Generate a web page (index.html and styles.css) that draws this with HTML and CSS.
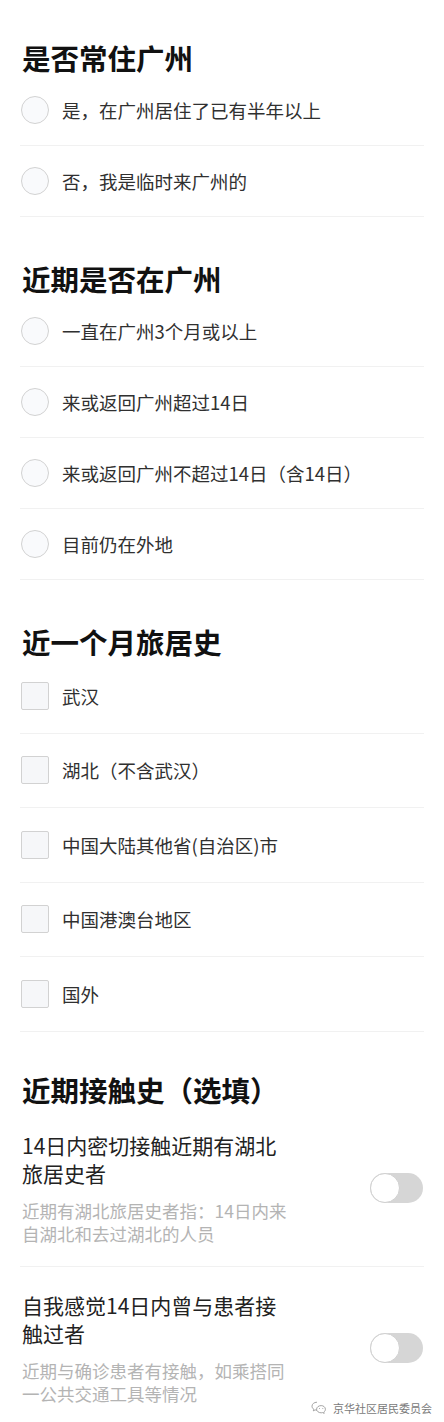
FILE: index.html
```html
<!DOCTYPE html>
<html lang="zh-CN">
<head>
<meta charset="utf-8">
<title>表单</title>
<link rel="stylesheet" href="styles.css">
</head>
<body>
<main class="form">
  <section class="group">
    <h2 class="group-title">是否常住广州</h2>
    <ul class="options">
      <li class="option"><span class="radio"></span><span class="label">是，在广州居住了已有半年以上</span></li>
      <li class="option"><span class="radio"></span><span class="label">否，我是临时来广州的</span></li>
    </ul>
  </section>

  <section class="group">
    <h2 class="group-title">近期是否在广州</h2>
    <ul class="options">
      <li class="option"><span class="radio"></span><span class="label">一直在广州3个月或以上</span></li>
      <li class="option"><span class="radio"></span><span class="label">来或返回广州超过14日</span></li>
      <li class="option"><span class="radio"></span><span class="label">来或返回广州不超过14日（含14日）</span></li>
      <li class="option"><span class="radio"></span><span class="label">目前仍在外地</span></li>
    </ul>
  </section>

  <section class="group">
    <h2 class="group-title">近一个月旅居史</h2>
    <ul class="options checks">
      <li class="option"><span class="checkbox"></span><span class="label">武汉</span></li>
      <li class="option"><span class="checkbox"></span><span class="label">湖北（不含武汉）</span></li>
      <li class="option"><span class="checkbox"></span><span class="label">中国大陆其他省(自治区)市</span></li>
      <li class="option"><span class="checkbox"></span><span class="label">中国港澳台地区</span></li>
      <li class="option"><span class="checkbox"></span><span class="label">国外</span></li>
    </ul>
  </section>

  <section class="group group-contact">
    <h2 class="group-title">近期接触史（选填）</h2>
    <div class="switch-item">
      <div class="switch-text">
        <p class="switch-title">14日内密切接触近期有湖北旅居史者</p>
        <p class="switch-desc">近期有湖北旅居史者指：14日内来自湖北和去过湖北的人员</p>
      </div>
      <span class="toggle"><span class="knob"></span></span>
    </div>
    <div class="switch-item last">
      <div class="switch-text">
        <p class="switch-title">自我感觉14日内曾与患者接触过者</p>
        <p class="switch-desc">近期与确诊患者有接触，如乘搭同一公共交通工具等情况</p>
      </div>
      <span class="toggle"><span class="knob"></span></span>
    </div>
  </section>

  <div class="watermark">
    <svg class="wm-icon" width="16" height="13" viewBox="0 0 16 13" fill="none" stroke="#9a9a9a" stroke-width="0.9">
      <path d="M6 1.2C3.1 1.2 1 3 1 5.2c0 1.3.7 2.4 1.8 3.1l-.5 1.6 1.8-1c.6.2 1.2.3 1.9.3"/>
      <path d="M10.2 4.6c-2.6 0-4.6 1.6-4.6 3.6s2 3.6 4.6 3.6c.5 0 1-.1 1.5-.2l1.5.8-.4-1.3c1-.7 1.6-1.7 1.6-2.9 0-2-2-3.6-4.2-3.6z"/>
      <circle cx="8.5" cy="7.6" r="0.5" fill="#9a9a9a" stroke="none"/>
      <circle cx="11.8" cy="7.6" r="0.5" fill="#9a9a9a" stroke="none"/>
    </svg>
    <span>京华社区居民委员会</span>
  </div>
</main>
</body>
</html>
```

FILE: styles.css
```css
html, body {
  margin: 0;
  padding: 0;
  background: #ffffff;
}

body {
  font-family: "Noto Sans CJK SC", "Noto Sans", sans-serif;
}

.form {
  position: relative;
  box-sizing: border-box;
  min-height: 1422px;
  padding: 41px 20px 0;
}

.group + .group {
  margin-top: 45px;
}

.group.group-contact {
  margin-top: 41px;
}

.group-title {
  margin: 0;
  padding-left: 2px;
  font-size: 28.5px;
  line-height: 34px;
  font-weight: 700;
  color: #111111;
}

.options {
  list-style: none;
  margin: 0;
  padding: 0;
}

.option {
  display: flex;
  align-items: center;
  gap: 13px;
  box-sizing: border-box;
  height: 71px;
  padding-left: 1px;
  border-bottom: 1px solid #f1f1f1;
}

.checks .option {
  height: 74.5px;
}

.radio,
.checkbox {
  flex: none;
  box-sizing: border-box;
  width: 28px;
  height: 28px;
  border: 1.5px solid #d2d2d2;
  background: #f9fafc;
}

.radio {
  border-radius: 50%;
}

.checkbox {
  border-radius: 2px;
  background: #f6f7f9;
}

.label {
  font-size: 18.5px;
  line-height: 1;
  color: #303030;
}

.switch-item {
  display: flex;
  align-items: center;
  justify-content: space-between;
  padding: 24px 0 21px;
  border-bottom: 1px solid #f1f1f1;
}

.switch-item.last {
  border-bottom: none;
}

.switch-text {
  width: 272px;
  padding-left: 2px;
}

.switch-title {
  margin: 0;
  font-size: 21px;
  line-height: 28.5px;
  color: #222222;
}

.switch-desc {
  margin: 11px 0 0;
  font-size: 17.5px;
  line-height: 23px;
  color: #b4b4b4;
}

.toggle {
  position: relative;
  flex: none;
  width: 53px;
  height: 30px;
  margin-right: 1px;
  border-radius: 15px;
  background: #d6d6d6;
}

.knob {
  position: absolute;
  left: 0;
  top: 0;
  box-sizing: border-box;
  width: 30px;
  height: 30px;
  border-radius: 50%;
  background: #ffffff;
  border: 1.5px solid #d0d0d0;
}

.watermark {
  position: absolute;
  right: 12px;
  bottom: 11px;
  display: flex;
  align-items: center;
  gap: 6px;
  font-size: 11px;
  line-height: 14px;
  color: #7a7a7a;
}

.wm-icon {
  display: block;
}
```
